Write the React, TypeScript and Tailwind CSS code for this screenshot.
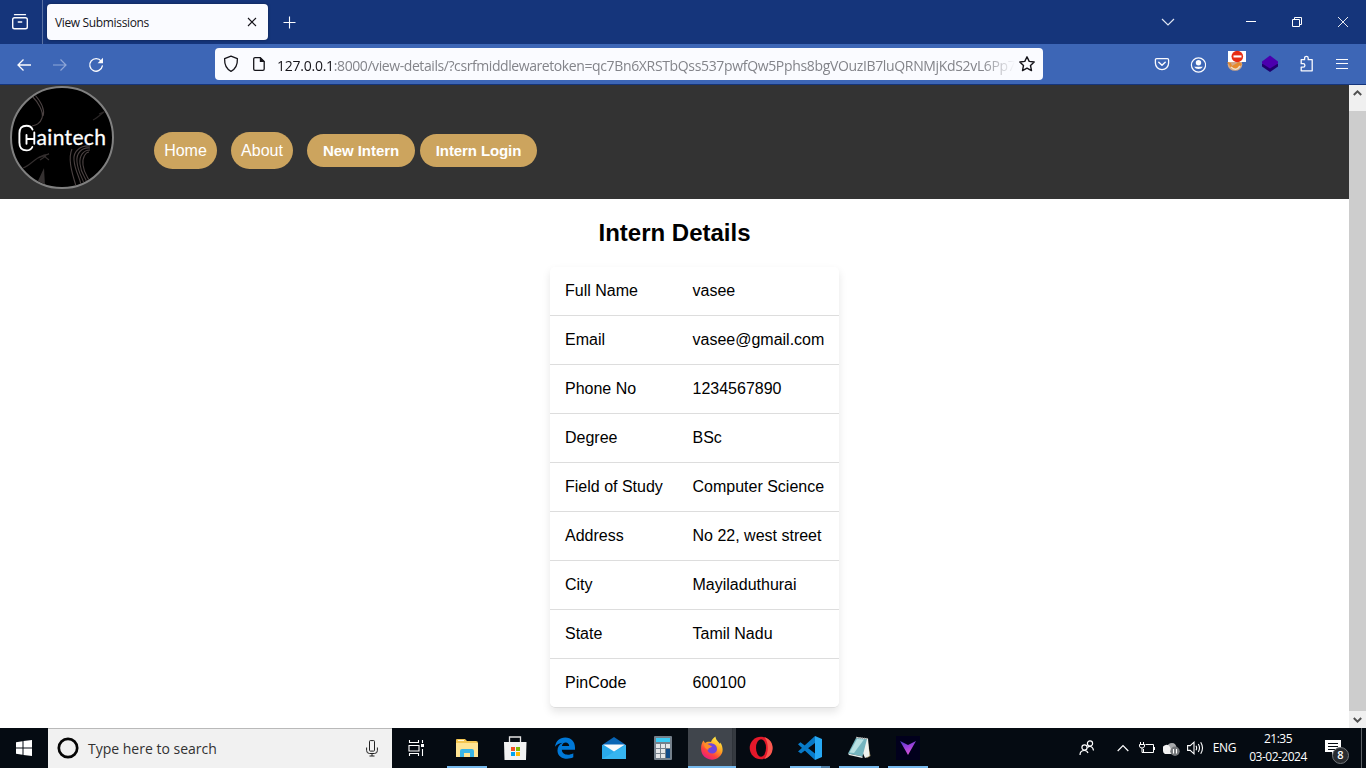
import React from "react";

const UI = "font-['Open_Sans','Noto_Sans',sans-serif]";

function Svg({ w, h, vb, children, className = "" }: { w: number; h: number; vb?: string; children: React.ReactNode; className?: string }) {
  return (
    <svg width={w} height={h} viewBox={vb ?? `0 0 ${w} ${h}`} fill="none" className={`block shrink-0 ${className}`}>
      {children}
    </svg>
  );
}

function Cell({ children, className = "" }: { children: React.ReactNode; className?: string }) {
  return <div className={`flex h-full shrink-0 items-center justify-center ${className}`}>{children}</div>;
}

function TabBar() {
  return (
    <div className="flex h-[44px] items-stretch bg-[#15357b]">
      <Cell className="w-[43px] border-r border-[#5b72a3] pr-[2px]">
        <Svg w={18} h={18}>
          <path d="M3.5 1.7H14.5" stroke="#fbfbfe" strokeWidth="1.3" strokeLinecap="round" />
          <rect x="1.7" y="4.8" width="14.6" height="11" rx="1.8" stroke="#fbfbfe" strokeWidth="1.4" />
          <path d="M7.3 9H10.7" stroke="#fbfbfe" strokeWidth="1.4" strokeLinecap="round" />
        </Svg>
      </Cell>
      <div className="my-[4px] ml-[4px] flex w-[221px] items-center rounded-[4px] bg-[#fafbff] pl-[8px] shadow-[0_0_3px_rgba(0,0,0,0.4)]">
        <span className={`${UI} mt-[2px] text-[12px] tracking-[-0.35px] text-[#15141a]`}>View Submissions</span>
        <Svg w={10} h={10} className="mr-[11px] ml-auto">
          <path d="M1 1L9 9M9 1L1 9" stroke="#15141a" strokeWidth="1.1" />
        </Svg>
      </div>
      <Cell className="w-[43px]">
        <Svg w={13} h={13} className="mt-[1px]">
          <path d="M6.5 .5V12.5M.5 6.5H12.5" stroke="#fbfbfe" strokeWidth="1.1" />
        </Svg>
      </Cell>
      <div className="flex-1" />
      <Cell className="w-[36px]">
        <Svg w={14} h={8}>
          <path d="M1 1L7 7L13 1" stroke="#dfe5f2" strokeWidth="1.2" />
        </Svg>
      </Cell>
      <Cell className="ml-[42px] w-[46px]">
        <Svg w={10} h={10} className="mr-[1px]">
          <path d="M0 4.5H10" stroke="#fff" />
        </Svg>
      </Cell>
      <Cell className="w-[46px]">
        <Svg w={10} h={10} className="mr-[1px]">
          <path d="M.5 2.5H7.5V9.5H.5ZM2.5 2.5V.5H9.5V7.5H7.5" stroke="#fff" />
        </Svg>
      </Cell>
      <Cell className="w-[46px]">
        <Svg w={10} h={10}>
          <path d="M0 0L10 10M10 0L0 10" stroke="#fff" strokeWidth=".9" />
        </Svg>
      </Cell>
    </div>
  );
}

function ToolBar() {
  return (
    <div className="flex h-[41px] items-center border-b border-[#15357b] bg-[#3d66b6] pl-[6px]">
      <Cell className="w-[36px]">
        <Svg w={16} h={14} className="mt-[1px]">
          <path d="M7.5 1.5L2 7L7.5 12.5M2 7H15" stroke="#fbfbfe" strokeWidth="1.3" />
        </Svg>
      </Cell>
      <Cell className="w-[36px]">
        <Svg w={16} h={14} className="mt-[1px]">
          <path d="M8.5 1.5L14 7L8.5 12.5M14 7H1" stroke="#90a7d7" strokeWidth="1.2" />
        </Svg>
      </Cell>
      <Cell className="w-[36px]">
        <Svg w={16} h={16} className="mt-[2px]">
          <path d="M13.2 4.2A6.3 6.3 0 1 0 14.3 9" stroke="#fbfbfe" strokeWidth="1.4" strokeLinecap="round" />
          <path d="M15 .8V6.2H9.6Z" fill="#fbfbfe" />
        </Svg>
      </Cell>
      <div className="ml-[101px] flex h-[32px] w-[828px] items-center rounded-[4px] bg-[#fafbff]">
        <Svg w={16} h={18} className="ml-[8px]">
          <path d="M8 1.2L14.4 3.6C14.6 9.5 12.5 14.2 8 16.3C3.5 14.2 1.4 9.5 1.6 3.6Z" stroke="#15141a" strokeWidth="1.3" strokeLinejoin="round" />
        </Svg>
        <Svg w={14} h={16} className="ml-[13px]">
          <path d="M3 1.7H8.3L12.2 5.6V13A1.3 1.3 0 0 1 10.9 14.3H3A1.3 1.3 0 0 1 1.7 13V3A1.3 1.3 0 0 1 3 1.7Z" stroke="#15141a" strokeWidth="1.3" />
          <path d="M7.8 1.2V6H12.8Z" fill="#15141a" />
        </Svg>
        <div className={`${UI} mt-[3px] ml-[11px] w-[738px] text-[14px] leading-[20px] tracking-[-0.34px] whitespace-nowrap text-[#83848a] [mask-image:linear-gradient(to_right,black_705px,transparent_738px)]`}>
          <span className="tracking-[-0.25px] text-[#15141a]">127.0.0.1</span><span className="tracking-[-0.42px]">:8000/view-details/?csrfmiddlewaretoken=</span>qc7Bn6XRSTbQss537pwfQw5Pphs8bgVOuzIB7luQRNMjKdS2vL6Pp7
        </div>
        <Svg w={18} h={18} className="ml-[3px]">
          <path d="M9 1.8L11.2 6.4L16.2 7L12.5 10.5L13.5 15.6L9 13.1L4.5 15.6L5.5 10.5L1.8 7L6.8 6.4Z" stroke="#15141a" strokeWidth="1.4" strokeLinejoin="round" />
        </Svg>
      </div>
      <div className="ml-[101px] flex h-full">
        <Cell className="w-[36px]">
          <Svg w={16} h={16}>
            <path d="M2.6 2.7H13.4A1.2 1.2 0 0 1 14.6 3.9V7A6.6 6.6 0 0 1 1.4 7V3.9A1.2 1.2 0 0 1 2.6 2.7Z" stroke="#fbfbfe" strokeWidth="1.3" />
            <path d="M4.8 6.3L8 9.2L11.2 6.3" stroke="#fbfbfe" strokeWidth="1.5" strokeLinecap="round" strokeLinejoin="round" />
          </Svg>
        </Cell>
        <Cell className="w-[38px] pr-[2px]">
          <Svg w={16} h={16} className="mt-[1px]">
            <circle cx="8.5" cy="8" r="7.1" stroke="#fbfbfe" strokeWidth="1.2" />
            <circle cx="8.5" cy="5.8" r="2.7" fill="#fbfbfe" />
            <path d="M4.1 9.7H12.9A5 4.6 0 0 1 4.1 9.7Z" fill="#fbfbfe" />
          </Svg>
        </Cell>
        <Cell className="w-[36px]">
          <Svg w={20} h={22} className="mb-[6px]">
            <ellipse cx="9" cy="14.5" rx="7.3" ry="6.3" fill="#d4a887" />
            <path d="M1 12L5 13L6 16L13 12L16 14L12 19L6 19Z" fill="#e68a2d" />
            <path d="M5 17Q10 22 14 16" stroke="#eee0ca" strokeWidth="1.4" />
            <rect x="2" y="1" width="18" height="11" fill="#fff" />
            <circle cx="11.3" cy="6.5" r="5.8" fill="#e72d14" />
            <rect x="7.5" y="5.4" width="8" height="2.1" fill="#fff" />
          </Svg>
        </Cell>
        <Cell className="w-[34px] pr-[2px]">
          <Svg w={16} h={18}>
            <path d="M0 9L8 5L16 9V11.5L8 17L0 11.5Z" fill="#20006e" />
            <path d="M8 .5L16 6.5V8.5L8 13.5L0 8.5V6.5Z" fill="#4b00ae" />
          </Svg>
        </Cell>
        <Cell className="w-[36px] pl-[1px]">
          <Svg w={16} h={18}>
            <path d="M2.2 4.7H5.6V3.1A1.8 1.8 0 0 1 9.2 3.1V4.7H13.2V15.8H2.2V12.1H4.2A1.7 1.7 0 0 0 4.2 8.7H2.2Z" stroke="#fbfbfe" strokeWidth="1.3" strokeLinejoin="round" />
          </Svg>
        </Cell>
        <Cell className="w-[36px]">
          <Svg w={12} h={12}>
            <path d="M0 1.5H12M0 5.5H12M0 10.5H12" stroke="#fbfbfe" />
          </Svg>
        </Cell>
      </div>
    </div>
  );
}

function Logo() {
  return (
    <div className="relative h-[103px] w-[104px] shrink-0 overflow-hidden rounded-full border-2 border-[#808080] bg-black">
      <Svg w={100} h={99}>
        <g stroke="#4a4141" strokeWidth="1.1">
          <path d="M20 8C26 14 32 24 30 30C28 36 24 37 20 38M23 7C30 15 33 22 31 28" />
          <path d="M81 32C87 29 91 24 96 21M87 26L96 22" stroke="#292525" />
          <path d="M78 58C69 57 61 63 62 72C63 84 68 89 69 97M78 60C70 59 64 65 65 74C66 85 71 90 72 96M78 62C72 62 67 67 68 76C69 87 74 89 75 95M77 64C74 64 70 69 71 77C72 86 76 89 78 94M60 61C56 70 59 82 64 98" />
          <path d="M11 80C20 77 24 67 37 66L26 70M32 68L37 72M28 72L34 68" stroke="#332e2e" />
        </g>
        <path d="M32 80L25 95L33 98Z" fill="#353131" />
      </Svg>
      <div className="absolute inset-0 flex items-center pl-[6px]">
        <Svg w={18} h={30}>
          <path d="M14.5 6.5C13.5 3.8 11.5 2.7 8.5 2.7C3.5 2.7 1.4 5.5 1.4 10.5V19.5C1.4 24.5 4.2 27.4 8.5 27.4C11.5 27.4 13.3 26.4 14.3 24M8.5 12V20.8M8.5 16H16.3M16.3 9.5V20.8" stroke="#fff" strokeWidth="1.9" strokeLinecap="round" />
        </Svg>
        <span className="-mt-[1px] ml-[0.5px] font-['Lato','Noto_Sans',sans-serif] text-[21px] leading-[28px] tracking-[0.35px] text-white [-webkit-text-stroke:0.3px_white]">aintech</span>
      </div>
    </div>
  );
}

function Header() {
  return (
    <header className="flex h-[114px] items-start bg-[#333] pt-[1px] pl-[10px] font-['Liberation_Sans',sans-serif] text-white">
      <Logo />
      <nav className="mt-[46px] ml-[40px] flex h-[37px] items-center">
        <a className="flex h-[37px] w-[63px] items-center justify-center rounded-[20px] bg-[#cca45e] text-[16px]">Home</a>
        <a className="ml-[14px] flex h-[37px] w-[62px] items-center justify-center rounded-[20px] bg-[#cca45e] text-[16px]">About</a>
        <button className="ml-[14px] h-[33px] w-[108px] rounded-[20px] bg-[#cca45e] pt-[1px] text-[15px] font-bold tracking-[-0.05px]">New Intern</button>
        <button className="ml-[5px] h-[33px] w-[117px] rounded-[20px] bg-[#cca45e] pt-[1px] text-[15px] font-bold tracking-[-0.1px]">Intern Login</button>
      </nav>
    </header>
  );
}

const rows: [string, string][] = [
  ["Full Name", "vasee"],
  ["Email", "vasee@gmail.com"],
  ["Phone No", "1234567890"],
  ["Degree", "BSc"],
  ["Field of Study", "Computer Science"],
  ["Address", "No 22, west street"],
  ["City", "Mayiladuthurai"],
  ["State", "Tamil Nadu"],
  ["PinCode", "600100"],
];

function Page() {
  return (
    <div className="flex h-[643px]">
      <main className="h-full w-[1349px] overflow-hidden bg-white font-['Liberation_Sans',sans-serif] text-black">
        <Header />
        <h2 className="mt-[20px] text-center text-[24px] leading-[28px] font-bold">Intern Details</h2>
        <div className="mt-[20px] ml-[550px] w-[289px] rounded-[5px] shadow-[0_4px_8px_rgba(0,0,0,0.1)]">
          {rows.map(([label, value]) => (
            <div key={label} className="flex h-[49px] items-center border-b border-[#ddd] pl-[15px] text-[16px] last:rounded-b-[5px]">
              <div className="w-[127.5px]">{label}</div>
              <div className="whitespace-nowrap">{value}</div>
            </div>
          ))}
        </div>
      </main>
      <div className="flex w-[17px] flex-col bg-[#f0f0f0]">
        <div className="flex h-[26px] justify-center pt-[4px]">
          <Svg w={9} h={8}>
            <path d="M.8 6L4.5 2.3L8.2 6" stroke="#505050" strokeWidth="2" />
          </Svg>
        </div>
        <div className="flex-1 bg-[#cdcdcd]" />
        <div className="flex h-[17px] items-center justify-center">
          <Svg w={9} h={8}>
            <path d="M.8 2L4.5 5.7L8.2 2" stroke="#505050" strokeWidth="2" />
          </Svg>
        </div>
      </div>
    </div>
  );
}

function TaskItem({ children, line = "", bg = "" }: { children: React.ReactNode; line?: string; bg?: string }) {
  return (
    <div className={`flex h-[40px] w-[49px] shrink-0 flex-col items-center ${bg}`}>
      <div className="flex h-[38px] items-center justify-center pt-[2px]">{children}</div>
      <div className={`h-[2px] ${line}`} />
    </div>
  );
}

function TaskBar() {
  return (
    <div className={`flex h-[40px] items-stretch bg-[#050b12] text-white ${UI}`}>
      <Cell className="w-[48px]">
        <Svg w={16} h={16}>
          <path d="M0 2.2L6.5 1.3V7.5H0ZM7.5 1.1L16 0V7.5H7.5ZM0 8.5H6.5V14.7L0 13.8ZM7.5 8.5H16V16L7.5 14.9Z" fill="#fff" />
        </Svg>
      </Cell>
      <div className="flex w-[344px] items-center border-t border-[#b9b9b9] bg-[#f1f1f1] pl-[9px]">
        <Svg w={22} h={22} className="-mt-[1px]">
          <circle cx="11" cy="11" r="9.2" stroke="#050505" strokeWidth="2.7" />
        </Svg>
        <span className="ml-[9px] text-[14px] text-[#323232]">Type here to search</span>
        <Svg w={12} h={17} className="mr-[14px] ml-auto">
          <rect x="3.5" y=".6" width="5" height="10.5" rx=".8" stroke="#222" />
          <path d="M.6 7.5V10.5Q.6 13.5 3.6 13.5H8.4Q11.4 13.5 11.4 10.5V7.5M6 13.5V16M3.5 16H8.5" stroke="#222" />
        </Svg>
      </div>
      <Cell className="w-[50px] pr-[2px]">
        <Svg w={17} h={16} className="-mt-[1px]">
          <path d="M1.5 0V2.5H10.5V0M1.5 16V13.5H10.5V16M1 5.5H11V11H1ZM14.5 0V3M14.5 9V16" stroke="#fff" strokeWidth="1.1" />
          <rect x="13" y="4" width="3" height="3" fill="#fff" />
        </Svg>
      </Cell>
      <TaskItem line="w-[40px] bg-[#76b9ed]">
        <Svg w={22} h={18}>
          <path d="M0 1Q0 0 1 0H9L11 2H20Q22 2 22 4V18H0Z" fill="#f4c652" />
          <path d="M0 4H22V18H0Z" fill="#ffe493" />
          <path d="M2 1H8V2H2Z" fill="#fff7d3" />
          <path d="M4 12Q4 10 6 10H16Q18 10 18 12V18H14V14H8V18H4Z" fill="#39b4e5" />
        </Svg>
      </TaskItem>
      <TaskItem>
        <Svg w={24} h={24} className="-ml-[2px]">
          <path d="M6.5 8V1H17.5V8" stroke="#e4e4e4" strokeWidth="1.3" />
          <path d="M1 6H23.5L23 24H1.5Z" fill="#f2f2f2" />
          <path d="M8 11H12V15H8Z" fill="#f25022" /><path d="M13 11H17V15H13Z" fill="#7fba00" />
          <path d="M8 16H12V20H8Z" fill="#00a4ef" /><path d="M13 16H17V20H13Z" fill="#ffb900" />
        </Svg>
      </TaskItem>
      <TaskItem>
        <Svg w={22} h={22}>
          <path d="M1 9.7C2 4 5.5.5 11.2.5C17.5.5 21 5 21 10.5V12.8H7.8C8.2 18.3 15 18.8 19.3 16.2V20.3C12.5 23.6 4 21.2 3.5 14.2C3.2 10.2 5.3 7.4 8.7 5.8C5.2 6.1 2.8 7.5 1 9.7ZM7.9 9H15.2C15.1 4.4 8.7 4.2 7.9 9Z" fill="#0078d7" fillRule="evenodd" />
        </Svg>
      </TaskItem>
      <TaskItem>
        <Svg w={24} h={22}>
          <path d="M0 8L12 0L24 8V11H0Z" fill="#0864b4" />
          <path d="M0 8H24V22H0Z" fill="#29a9ea" />
          <path d="M0 22L24 8V22Z" fill="#36b5f0" />
          <path d="M1 7.5H23L12 14.5Z" fill="#f7f9fb" />
        </Svg>
      </TaskItem>
      <TaskItem>
        <Svg w={18} h={24}>
          <rect width="18" height="24" rx="1" fill="#74808b" />
          <path d="M2 2H16V6H2Z" fill="#3bccf6" />
          <path d="M2 8H6V12H2ZM7 8H11V12H7ZM12 8H16V12H12ZM2 13H6V17H2ZM7 13H11V17H7ZM2 18H6V22H2ZM7 18H11V22H7Z" fill="#e5e7e9" />
          <path d="M12 13H16V22H12Z" fill="#104b88" />
        </Svg>
      </TaskItem>
      <TaskItem bg="bg-[linear-gradient(to_right,#050b12_1px,#40454c_1px,#40454c_45px,#292e34_45px,#353a40_46px)]" line="ml-px w-[48px] bg-[#76b9ed]">
        <Svg w={24} h={24}>
          <defs>
            <linearGradient id="ff" x1="19" y1="2" x2="5" y2="23" gradientUnits="userSpaceOnUse">
              <stop stopColor="#fff04a" /><stop offset=".4" stopColor="#ffa421" /><stop offset=".7" stopColor="#ff423e" /><stop offset="1" stopColor="#e3148c" />
            </linearGradient>
          </defs>
          <path d="M3.5 4.5L5 7C7 5.5 9 5.7 11 6C12 3.5 13 2 15.5.5C15.5 4 19 6 20 8L20.5 6.5C24 13 23 18 19 21C14 25.5 6 24 2.6 18.5C0 14 1 7.5 3.5 4.5Z" fill="url(#ff)" />
          <path d="M7 8C11 6 17 8 17 13C17 17 12 19 9 16.5C7.5 15.3 7 13.5 8 12L12 10.5C10 10 8 9.5 7 8Z" fill="#7045dc" />
          <path d="M4 8C5 7 8 8 12 10.5C10 12 8 12 8.2 14C5 12.5 4 10.5 4 8Z" fill="#ff8d28" />
        </Svg>
      </TaskItem>
      <TaskItem>
        <Svg w={24} h={24}>
          <ellipse cx="12" cy="12" rx="11.3" ry="11.3" fill="#e5182a" />
          <path d="M15 1C27 4 26 21 15 23C20 19 20 5 15 1Z" fill="#fb5a50" />
          <ellipse cx="12" cy="12" rx="5" ry="8.7" fill="#050b12" />
        </Svg>
      </TaskItem>
      <TaskItem line="w-[40px] bg-[linear-gradient(to_right,#76b9ed_31px,#4f7ea5_31px)]">
        <Svg w={24} h={24}>
          <path d="M17 5V17.5L2.5 6.3L0 8.3L17 24Z" fill="#087dcc" />
          <path d="M17 0V7L3 17.5L0 15.5Z" fill="#0879c6" />
          <path d="M17 0L24 3V21L17 24Z" fill="#27a9f4" />
        </Svg>
      </TaskItem>
      <TaskItem line="w-[40px] bg-[#76b9ed]">
        <Svg w={24} h={24}>
          <path d="M20 2L23.5 20L20 22L17 19Z" fill="#a18e61" />
          <path d="M9 1L21 2.5L22.5 20L18 22Z" fill="#eff3ef" />
          <path d="M9 2L20 3L15.5 20.5L1 17.5Z" fill="#74b5bf" />
          <path d="M10 3L17 3.5L7 17L2.5 16.5Z" fill="#b8e1e3" />
          <path d="M1 17.5L15.5 20.5V22L2 19Z" fill="#e8f1ef" />
          <path d="M9 1.5L20 2.7" stroke="#999" strokeWidth="1.5" strokeDasharray="1 1" />
        </Svg>
      </TaskItem>
      <TaskItem line="w-[40px] bg-[#76b9ed]">
        <Svg w={24} h={24}>
          <defs>
            <linearGradient id="tri" x1="8" y1="4" x2="13" y2="18" gradientUnits="userSpaceOnUse">
              <stop stopColor="#4a3fc8" /><stop offset=".5" stopColor="#9a40dc" /><stop offset="1" stopColor="#d354d8" />
            </linearGradient>
          </defs>
          <path d="M0 0H24V24H0Z" fill="#01001c" />
          <path d="M4 5L12 9L20 5L12 19Z" fill="url(#tri)" />
        </Svg>
      </TaskItem>
      <div className="flex-1" />
      <Cell className="w-[36px]">
        <Svg w={16} h={16}>
          <circle cx="5.5" cy="7.5" r="2.6" stroke="#fff" strokeWidth="1.2" /><circle cx="11" cy="3.4" r="2.6" stroke="#fff" strokeWidth="1.2" />
          <path d="M1 15Q1 10.5 5.5 10.5Q8 10.5 9 13M8.5 7.7Q9.7 6.2 11.5 6.5Q14 7 14.5 10.5" stroke="#fff" strokeWidth="1.2" />
        </Svg>
      </Cell>
      <Cell className="w-[34px] pl-[2px]">
        <Svg w={12} h={8}>
          <path d="M.7 7L6 1.7L11.3 7" stroke="#fff" strokeWidth="1.2" />
        </Svg>
      </Cell>
      <Cell className="w-[16px]">
        <Svg w={16} h={12}>
          <path d="M6.5 2.5H14.5V10.5H4.5V7M15.5 5V8M1.5 0V2M4.5 0V2M.5 2.5H5.5V4Q5.5 6 3 6Q.5 6 .5 4ZM3 6V10.5H5" stroke="#fff" />
        </Svg>
      </Cell>
      <Cell className="ml-[8px] w-[16px]">
        <Svg w={17} h={14} className="mt-[2px]">
          <path d="M4 5Q5 1 9 1Q13 1 13.5 6L8 12Z" fill="#a9abad" /><path d="M0 9A4 4 0 0 1 7 5L10 12H2Q0 11 0 9Z" fill="#f3f3f3" />
          <circle cx="12" cy="9.2" r="4.7" fill="#74777a" /><path d="M10.5 7V11.5M13.5 7V11.5" stroke="#fff" strokeWidth="1.1" />
        </Svg>
      </Cell>
      <Cell className="ml-[8px] w-[17px]">
        <Svg w={17} h={14}>
          <path d="M.6 4.6H3.2L7 1.2V12.8L3.2 9.4H.6Z" stroke="#fff" strokeWidth="1.1" />
          <path d="M9 4.8Q10.3 7 9 9.2M11.3 3Q13.7 7 11.3 11M13.7 1.3Q17.3 7 13.7 12.7" stroke="#fff" strokeWidth="1.1" />
        </Svg>
      </Cell>
      <Cell className="w-[41px]"><span className="text-[12px] tracking-[-0.3px]">ENG</span></Cell>
      <div className="flex w-[66px] flex-col items-center pt-[2px] text-[12px] leading-[18px] tracking-[-0.5px]">
        <span>21:35</span>
        <span className="whitespace-nowrap">03-02-2024</span>
      </div>
      <div className="relative flex w-[49px] pt-[11px] pl-[14px]">
        <Svg w={17} h={17}>
          <path d="M0 1H16V13H11L7 17V13H0Z" fill="#fff" />
          <path d="M3 4.5H13M3 7.5H13M3 10.5H10" stroke="#050b12" />
        </Svg>
        <span className="absolute top-[19px] left-[21px] flex h-[17px] w-[17px] items-center justify-center rounded-full border border-[#73777b] bg-[#292c30] text-[11px] font-semibold">8</span>
      </div>
      <div className="ml-[1px] w-[5px] border-l border-[#5c6166]" />
    </div>
  );
}

export default function App() {
  return (
    <div className="flex h-[768px] w-[1366px] flex-col overflow-hidden">
      <TabBar />
      <ToolBar />
      <Page />
      <TaskBar />
    </div>
  );
}
